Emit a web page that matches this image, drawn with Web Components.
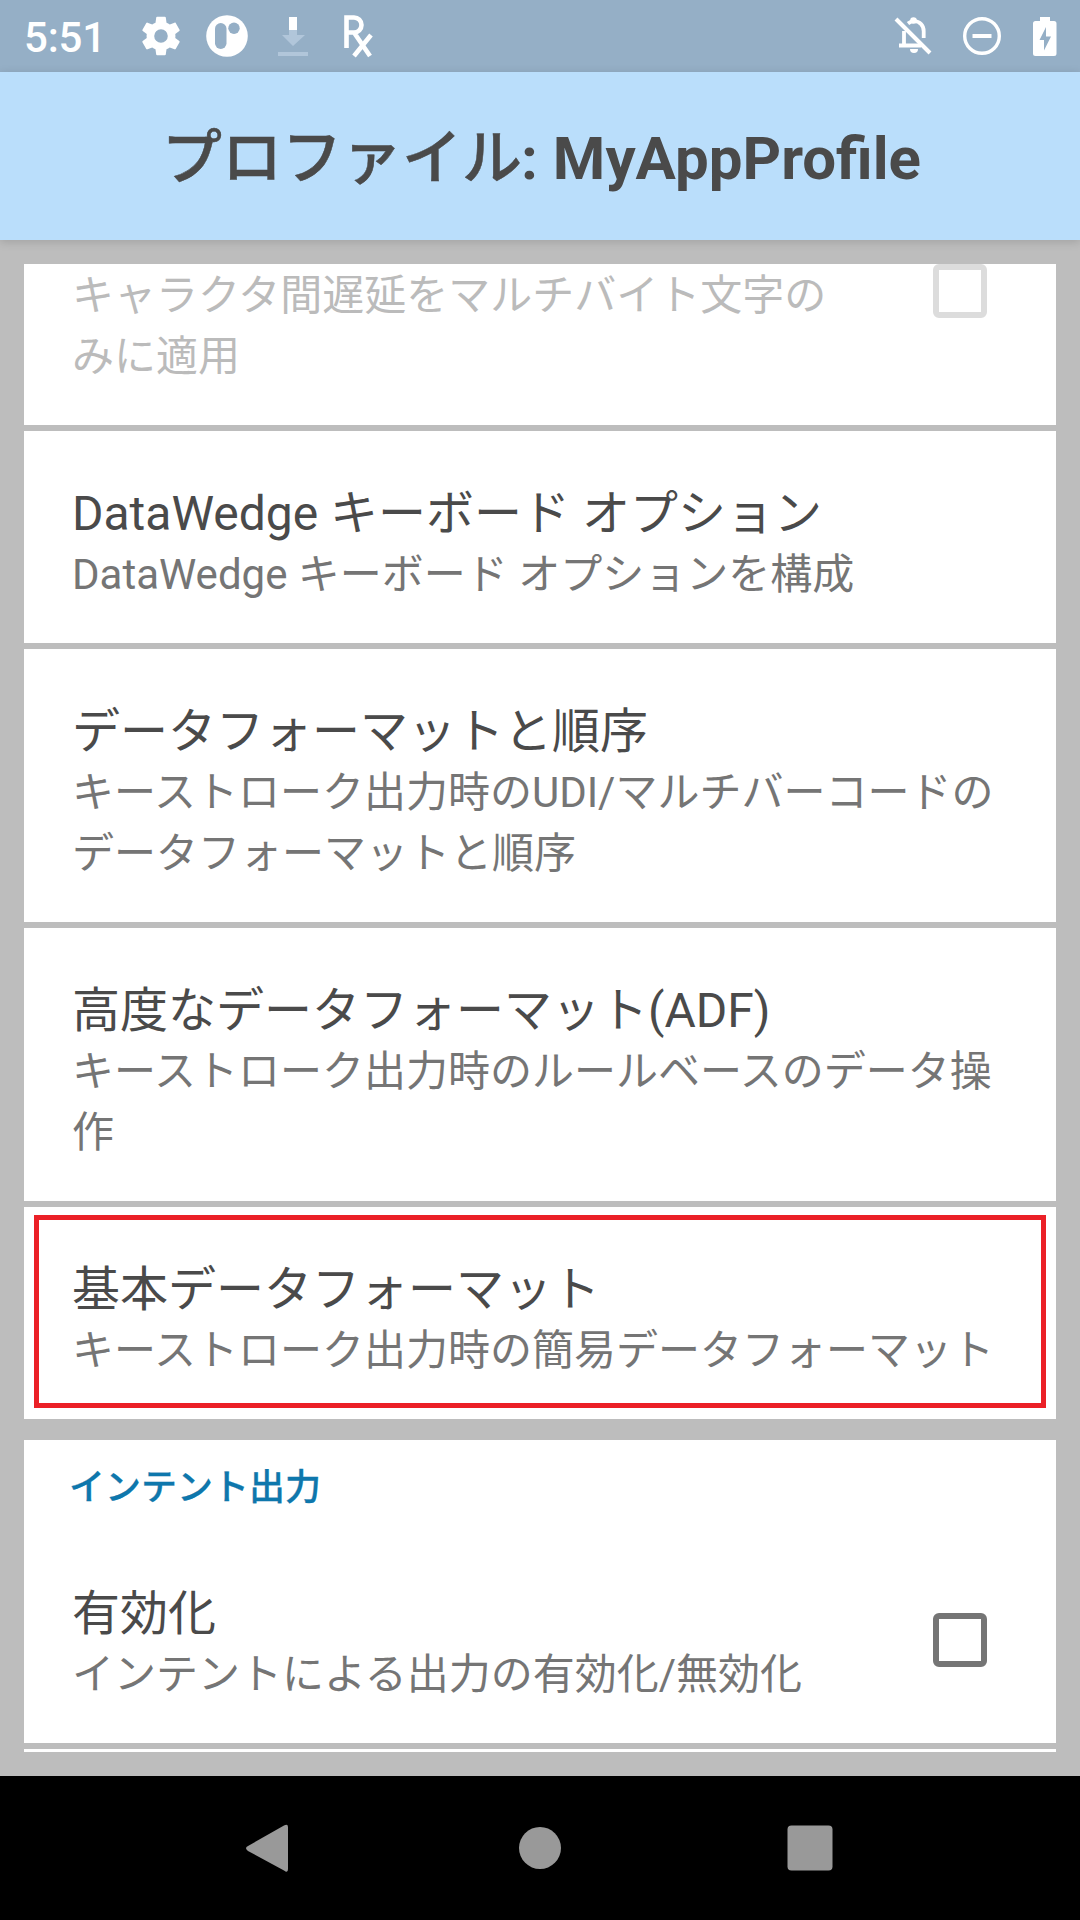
<!DOCTYPE html>
<html lang="ja">
<head>
<meta charset="utf-8">
<title>DataWedge</title>
<style>
html,body{margin:0;padding:0}
body{font-family:Roboto,"Noto Sans CJK JP",sans-serif;background:#bdbdbd}
</style>
</head>
<body>
<dw-screen>
  <status-bar slot="top" time="5:51"></status-bar>
  <app-header slot="top"><span slot="label">プロファイル</span><span slot="name">: MyAppProfile</span></app-header>
  <setting-group>
    <setting-row clipped disabled check><span slot="summary">キャラクタ間遅延をマルチバイト文字のみに適用</span></setting-row>
    <setting-row><span slot="title">DataWedge キーボード オプション</span><span slot="summary">DataWedge キーボード オプションを構成</span></setting-row>
    <setting-row><span slot="title">データフォーマットと順序</span><span slot="summary">キーストローク出力時のUDI/マルチバーコードのデータフォーマットと順序</span></setting-row>
    <setting-row><span slot="title">高度なデータフォーマット(ADF)</span><span slot="summary">キーストローク出力時のルールベースのデータ操作</span></setting-row>
    <setting-row marked><span slot="title">基本データフォーマット</span><span slot="summary">キーストローク出力時の簡易データフォーマット</span></setting-row>
  </setting-group>
  <setting-group>
    <setting-row check><span slot="category">インテント出力</span><span slot="title">有効化</span><span slot="summary">インテントによる出力の有効化/無効化</span></setting-row>
    <setting-row sliver></setting-row>
  </setting-group>
  <nav-bar slot="bottom"></nav-bar>
</dw-screen>
<script>
const define = (name, html) => customElements.define(name, class extends HTMLElement {
  constructor() {
    super();
    this.attachShadow({ mode: 'open' }).innerHTML = html;
  }
  connectedCallback() {
    const t = this.shadowRoot.querySelector('.time');
    if (t) t.textContent = this.getAttribute('time');
  }
});

define('dw-screen', `<style>
:host{display:flex;flex-direction:column;width:1080px;height:1920px;overflow:hidden;background:#bdbdbd}
.list{flex:1;display:flex;flex-direction:column;gap:21px;padding:24px 24px 0}
</style><slot name="top"></slot><div class="list"><slot></slot></div><slot name="bottom"></slot>`);

define('status-bar', `<style>
:host{display:flex;height:72px;background:#95afc6;align-items:center;justify-content:space-between;padding:0 23px 0 24px;box-sizing:border-box;color:#fff}
.side{display:flex;align-items:center}
.time{font-size:42px;font-weight:500;line-height:69px;padding-top:3px;width:116px;letter-spacing:-.2px}
svg{display:block;fill:#fff}
</style>
<div class="side"><span class="time"></span>
<svg width="42" height="42" viewBox="1.5 1.5 21 21"><path d="M19.14 12.94c.04-.3.06-.61.06-.94 0-.32-.02-.64-.07-.94l2.03-1.58c.18-.14.23-.41.12-.61l-1.92-3.32c-.12-.22-.37-.29-.59-.22l-2.39.96c-.5-.38-1.03-.7-1.62-.94l-.36-2.54c-.04-.24-.24-.41-.48-.41h-3.84c-.24 0-.43.17-.47.41l-.36 2.54c-.59.24-1.13.57-1.62.94l-2.39-.96c-.22-.08-.47 0-.59.22L2.74 8.87c-.12.21-.08.47.12.61l2.03 1.58c-.05.3-.09.63-.09.94s.02.64.07.94l-2.03 1.58c-.18.14-.23.41-.12.61l1.92 3.32c.12.22.37.29.59.22l2.39-.96c.5.38 1.03.7 1.62.94l.36 2.54c.05.24.24.41.48.41h3.84c.24 0 .44-.17.47-.41l.36-2.54c.59-.24 1.13-.56 1.62-.94l2.39.96c.22.08.47 0 .59-.22l1.92-3.32c.12-.22.07-.47-.12-.61l-2.01-1.58zM12 15.4a3.4 3.4 0 1 1 0-6.8 3.4 3.4 0 0 1 0 6.8z"/></svg>
<svg width="42" height="42" style="margin-left:24px" viewBox="0 0 42 42"><circle cx="21" cy="21" r="20.8"/><rect x="9" y="8" width="11.5" height="26" rx="5.75" fill="#95afc6"/><circle cx="28" cy="13.2" r="5.7" fill="#95afc6"/></svg>
<svg width="30" height="40" style="margin-left:30px" viewBox="0 0 30 40"><path d="M11 14h8v5h8L15 30 4 19h7zM0 36h30v4H0z" fill="#b1c6da"/><path d="M11 1h8v13h-8z"/></svg>
<svg width="30" height="44" style="margin-left:36px" viewBox="0 0 30 44"><path d="M2.500 34V3.500H10a7.500 7.500 0 0 1 0 15H2.500M10 18.500 26 42M27 21 10 42" fill="none" stroke="#fff" stroke-width="4.600"/></svg>
</div>
<div class="side">
<svg width="38" height="40" viewBox="0 0 38 40"><path d="M10 15v14M5 29.500h22M14 7.500c2-1.600 4-2.300 6-2.300 6 0 9.700 4.500 9.700 10V22" fill="none" stroke="#fff" stroke-width="3.800"/><circle cx="19.500" cy="4.500" r="3.300"/><path d="M16 33h8a4 4 0 0 1-8 0z"/><path d="M2 3 36 37" stroke="#fff" stroke-width="4"/></svg>
<svg width="38" height="38" style="margin-left:31px" viewBox="0 0 38 38"><circle cx="19" cy="19" r="17.300" fill="none" stroke="#fff" stroke-width="3.400"/><path d="M9.500 17h19v4h-19z"/></svg>
<svg width="24" height="39" style="margin-left:32px" viewBox="0 0 24 39"><path fill-rule="evenodd" d="M7 0h10v4h4A2.500 2.500 0 0 1 23.500 6.500v30a2.500 2.500 0 0 1-2.500 2.500h-18.500A2.500 2.500 0 0 1 0 36.500v-30A2.500 2.500 0 0 1 2.500 4H7zM13 10 6.500 23H11v10.500L18 19.500h-5z"/></svg>
</div>`);

define('app-header', `<style>
:host{display:flex;height:168px;background:#badefb;align-items:center;justify-content:center;color:#4a4a4a;font-size:60px;font-weight:700;box-shadow:0 2px 9px rgba(0,0,0,.15);position:relative;line-height:72px;white-space:pre}
.t{display:flex;padding:6px 0 0 3px}
.jp{font-weight:500;-webkit-text-stroke:.5px #4a4a4a}
.en{margin-left:-1px}
</style><div class="t"><div class="jp"><slot name="label"></slot></div><div class="en"><slot name="name"></slot></div></div>`);

define('setting-group', `<style>
:host{display:flex;flex-direction:column;gap:6px}
</style><slot></slot>`);

define('setting-row', `<style>
:host{display:block;background:#fff;position:relative}
.cat{color:#0e77ac;font-size:36px;font-weight:500;line-height:52px;-webkit-text-stroke:.3px #0e77ac}
.cat ::slotted(span){display:block;padding:22px 0 17px 45px}
.main{display:flex;align-items:center;padding:52px 60px 38px 48px}
.text{flex:1}
.title,.sum{line-height:61px}
.title{font-size:48px;color:#4a4a4a}
.sum{font-size:42px;color:#757575}
.box{display:none;width:54px;height:54px;border:6px solid #757575;border-radius:6px;box-sizing:border-box;margin:0 9px 8px 90px}
:host([check]) .box{display:block}
:host([clipped]) .main{padding-top:1px;align-items:flex-start}
:host([clipped]) .box{margin-top:-1px}
:host([disabled]) .sum{color:#bbb}
:host([disabled]) .box{border-color:#dcdcdc}
:host([sliver]){height:3px;overflow:hidden}
.mark{display:none;position:absolute;left:10px;right:10px;top:8px;height:183px;border:5px solid #eb2027}
:host([marked]) .mark{display:block}
</style>
<div class="cat"><slot name="category"></slot></div>
<div class="main"><div class="text"><div class="title"><slot name="title"></slot></div><div class="sum"><slot name="summary"></slot></div></div><div class="box"></div></div>
<div class="mark"></div>`);

define('nav-bar', `<style>
:host{display:flex;height:144px;background:#000;justify-content:center}
svg{display:block;fill:#999}
</style><svg width="1080" height="144" viewBox="0 0 1080 144"><path d="M248 70 284 49.500Q288 47.500 288 51V93Q288 97.500 284 94.500L248 75Q244 72 248 70z"/><circle cx="540" cy="72" r="21"/><rect x="787.500" y="49.500" width="45" height="45" rx="4"/></svg>`);
</script>
</body>
</html>
